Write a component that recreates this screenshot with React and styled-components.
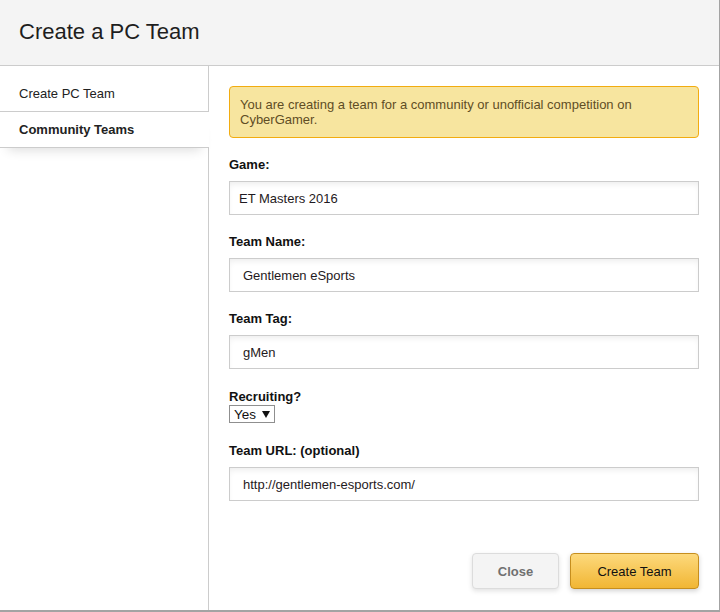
import React from "react";
import styled, { createGlobalStyle } from "styled-components";

const Global = createGlobalStyle`
  html, body { margin: 0; padding: 0; background: #fff; }
  body { font-family: Arial, "Liberation Sans", sans-serif; color: #222; }
  * { box-sizing: border-box; }
`;

const Modal = styled.div`
  width: 720px;
  height: 612px;
  display: flex;
  flex-direction: column;
  background: #fff;
  border-right: 1px solid #a3a3a3;
  border-bottom: 2px solid #a3a3a3;
`;

const Header = styled.div`
  height: 66px;
  flex: none;
  background: #f4f4f4;
  border-bottom: 1px solid #cccccc;
  display: flex;
  align-items: center;
  padding: 0 0 1px 19px;
`;

const Title = styled.h1`
  margin: 0;
  font-size: 22px;
  font-weight: normal;
  color: #1e1e1e;
`;

const Body = styled.div`
  flex: 1;
  display: flex;
  min-height: 0;
`;

const Sidebar = styled.nav`
  width: 209px;
  flex: none;
  border-right: 1px solid #cccccc;
  padding-top: 10px;
  display: flex;
  flex-direction: column;
`;

const NavItem = styled.div`
  height: 36px;
  display: flex;
  align-items: center;
  padding-left: 19px;
  font-size: 13px;
  color: #222;
  border-bottom: 1px solid #cccccc;
  background: #fff;
  font-weight: ${(p) => (p.$active ? "bold" : "normal")};
  position: relative;
  margin-right: ${(p) => (p.$active ? "-1px" : "0")};
  z-index: ${(p) => (p.$active ? 1 : 0)};
  box-shadow: ${(p) => (p.$active ? "0 10px 12px -8px rgba(0,0,0,0.14)" : "none")};
`;

const Main = styled.main`
  flex: 1;
  display: flex;
  flex-direction: column;
  padding: 20px 20px 21px 20px;
`;

const Alert = styled.div`
  background: #f7e59f;
  border: 1px solid #f2ac10;
  border-radius: 4px;
  padding: 10px 10px;
  font-size: 13px;
  line-height: 15px;
  color: #5f4d25;
  margin-bottom: 19px;
`;

const Group = styled.div`
  margin-bottom: ${(p) => p.$mb ?? 19}px;
`;

const Label = styled.label`
  display: block;
  font-size: 13px;
  font-weight: bold;
  line-height: 15px;
  color: #111;
  margin-bottom: ${(p) => p.$mb ?? 9}px;
`;

const Input = styled.div`
  height: 34px;
  border: 1px solid #cccccc;
  background: #fff;
  box-shadow: inset 0 4px 6px -2px rgba(0, 0, 0, 0.08);
  display: flex;
  align-items: center;
  padding-left: ${(p) => p.$pad ?? 13}px;
  font-size: 13px;
  color: #1f1a22;
`;

const Select = styled.div`
  display: inline-flex;
  align-items: center;
  height: 18px;
  width: 46px;
  border: 1px solid #8f8f8f;
  padding: 1px 0 0 4px;
  font-size: 13.5px;
  color: #111;
  gap: 6px;
  svg { display: block; }
`;

const Footer = styled.div`
  margin-top: auto;
  display: flex;
  justify-content: flex-end;
  gap: 11px;
`;

const Button = styled.button`
  height: 36px;
  width: ${(p) => p.$w}px;
  border-radius: 4px;
  font-family: Arial, "Liberation Sans", sans-serif;
  font-size: 13px;
  cursor: pointer;
  padding: 0;
  ${(p) =>
    p.$primary
      ? `
    background: linear-gradient(#fdd97c, #f1b634);
    border: 1px solid #c68e1e;
    color: #111;
    font-weight: normal;
    box-shadow: 0 2px 5px rgba(0,0,0,0.18);
  `
      : `
    background: #f4f4f4;
    border: 1px solid #dcdcdc;
    color: #707070;
    font-weight: bold;
    box-shadow: 0 2px 5px rgba(0,0,0,0.12);
  `}
`;

export default function App() {
  return (
    <>
      <Global />
      <Modal>
        <Header>
          <Title>Create a PC Team</Title>
        </Header>
        <Body>
          <Sidebar>
            <NavItem>Create PC Team</NavItem>
            <NavItem $active>Community Teams</NavItem>
          </Sidebar>
          <Main>
            <Alert>
              You are creating a team for a community or unofficial competition on
              <br />
              CyberGamer.
            </Alert>
            <Group>
              <Label>Game:</Label>
              <Input $pad={9}>ET Masters 2016</Input>
            </Group>
            <Group>
              <Label>Team Name:</Label>
              <Input>Gentlemen eSports</Input>
            </Group>
            <Group $mb={20}>
              <Label>Team Tag:</Label>
              <Input>gMen</Input>
            </Group>
            <Group $mb={20}>
              <Label $mb={1}>Recruiting?</Label>
              <Select>
                <span>Yes</span>
                <svg width="8" height="7" viewBox="0 0 8 7">
                  <path d="M0 0 H8 L4 7 Z" fill="#111" />
                </svg>
              </Select>
            </Group>
            <Group>
              <Label>Team URL: (optional)</Label>
              <Input>http://gentlemen-esports.com/</Input>
            </Group>
            <Footer>
              <Button $w={87}>Close</Button>
              <Button $primary $w={129}>Create Team</Button>
            </Footer>
          </Main>
        </Body>
      </Modal>
    </>
  );
}
